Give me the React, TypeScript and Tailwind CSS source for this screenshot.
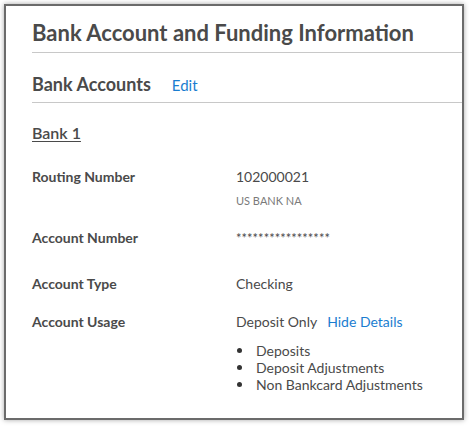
import React from 'react';

const usage = ['Deposits', 'Deposit Adjustments', 'Non Bankcard Adjustments'];

function App() {
  return (
    <div className="min-h-[427px] w-[469px] bg-white p-[4px] font-['Lato',sans-serif]">
      <div className="h-[416px] w-[460px] border-2 border-[#6b6b6b] bg-white pl-[26px] shadow-[0_0_5px_rgba(0,0,0,0.35)]">
        <h1 className="border-b border-[#c8c8c8] pb-[5px] pt-[13px] text-[22px] font-bold leading-[28px] text-[#4a4a4a]">
          Bank Account and Funding Information
        </h1>
        <div className="flex items-baseline gap-[21px] border-b border-[#c8c8c8] pb-[5px] pt-[20px]">
          <h2 className="text-[18px] font-bold leading-[22px] text-[#4a4a4a]">Bank Accounts</h2>
          <a className="text-[15px] text-[#1a7dd0]">Edit</a>
        </div>
        <div className="pt-[20px] text-[16px] font-semibold leading-[20px] text-[#4a4a4a] underline underline-offset-2">
          Bank 1
        </div>
        <div className="mt-[25px] text-[14px] leading-[18px] text-[#4a4a4a]">
          <div className="grid grid-cols-[204px_1fr]">
            <div className="font-bold">Routing Number</div>
            <div>
              <div>102000021</div>
              <div className="mt-[8px] text-[11px] leading-[14px] text-[#7a7a7a]">US BANK NA</div>
            </div>
          </div>
          <div className="mt-[21px] grid grid-cols-[204px_1fr]">
            <div className="font-bold">Account Number</div>
            <div className="text-[13px]">*****************</div>
          </div>
          <div className="mt-[28px] grid grid-cols-[204px_1fr]">
            <div className="font-bold">Account Type</div>
            <div>Checking</div>
          </div>
          <div className="mt-[20px] grid grid-cols-[204px_1fr]">
            <div className="font-bold">Account Usage</div>
            <div>
              <div className="flex gap-[10px]">
                <span>Deposit Only</span>
                <a className="text-[#1a7dd0]">Hide Details</a>
              </div>
              <ul className="mt-[11px] leading-[17px]">
                {usage.map(u => (
                  <li key={u} className="flex items-center">
                    <span className="ml-[1px] mr-[14px] h-[5px] w-[5px] rounded-full bg-[#333]" />
                    {u}
                  </li>
                ))}
              </ul>
            </div>
          </div>
        </div>
      </div>
    </div>
  );
}

export default App;
